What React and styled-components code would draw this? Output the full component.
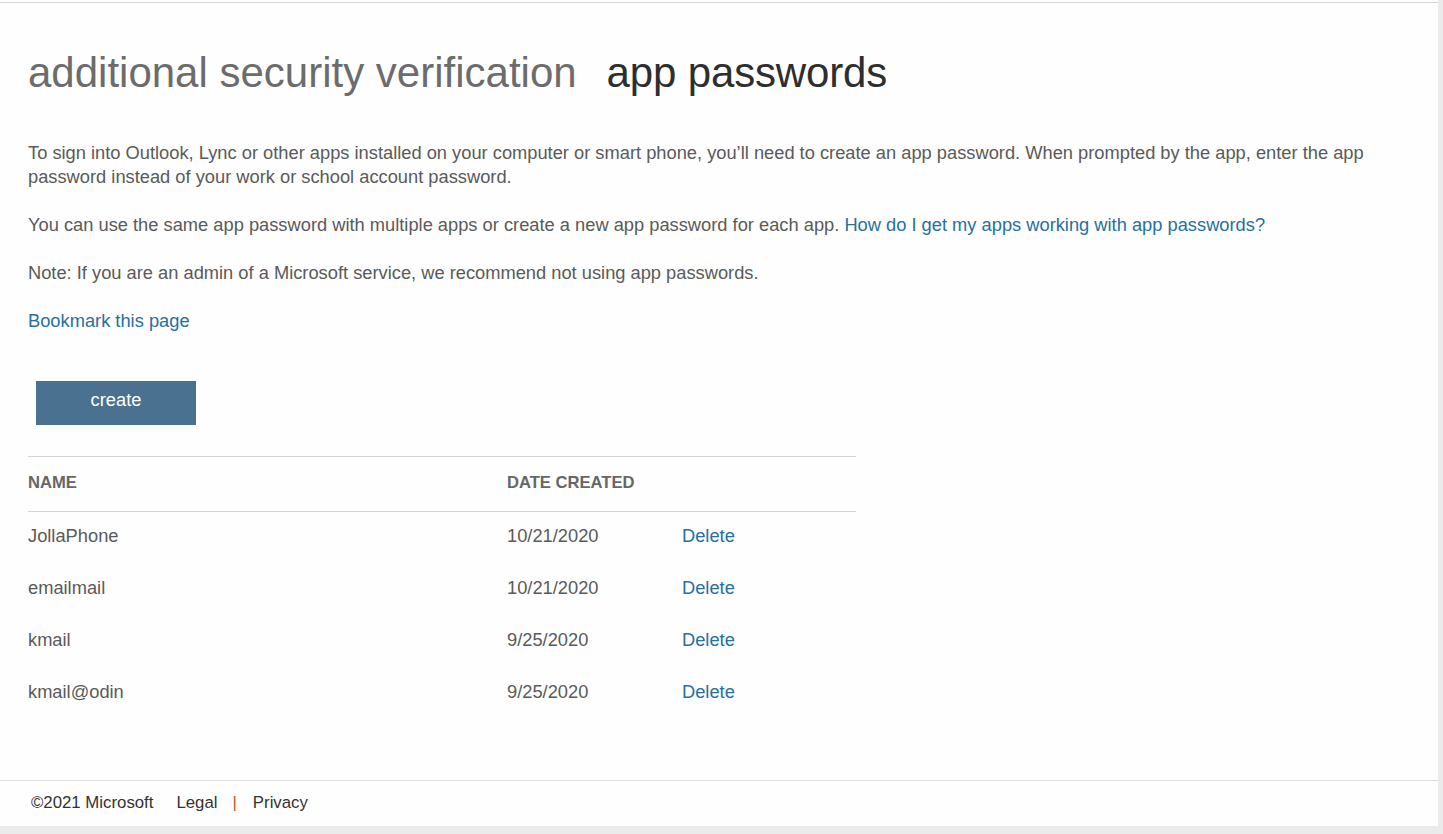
import React from 'react';
import styled, { createGlobalStyle } from 'styled-components';

const GlobalStyle = createGlobalStyle`
  html, body {
    margin: 0;
    padding: 0;
    height: 834px;
    overflow: hidden;
    background: #ebebeb;
  }
  body {
    font-family: "Liberation Sans", Arial, sans-serif;
  }
`;

// 整個頁面，右邊和下面留出灰色的捲軸區
const Page = styled.div`
  width: 1438px;
  height: 826px;
  background: #fefefe;
  display: flex;
  flex-direction: column;
`;

const TopRule = styled.div`
  height: 2px;
  border-bottom: 1px solid #d6d6d6;
`;

const Main = styled.main`
  padding: 0 28px;
  display: flex;
  flex-direction: column;
  align-items: flex-start;
`;

const Heading = styled.h1`
  margin: 46px 0 44px;
  font-size: 42px;
  font-weight: 400;
  line-height: 48px;
  white-space: nowrap;
`;

const Crumb = styled.span`
  color: ${({ $active }) => ($active ? '#2e2e2e' : '#6c6c6c')};
  margin-right: ${({ $active }) => ($active ? '0' : '30px')};
  letter-spacing: ${({ $active }) => ($active ? '-0.15px' : '0')};
`;

const Para = styled.p`
  margin: 0 0 24px;
  font-size: 18.3px;
  line-height: 24px;
  color: #5a5a5a;
  max-width: 1382px;
`;

const Link = styled.a`
  color: #27709f;
  text-decoration: none;
  cursor: pointer;
`;

const CreateButton = styled.button`
  margin: 24px 0 31px 8px;
  width: 160px;
  height: 44px;
  padding: 0 0 6px;
  border: none;
  background: #4a718f;
  color: #fff;
  font-family: inherit;
  font-size: 18.3px;
  cursor: pointer;
`;

const Table = styled.div`
  width: 828px;
  border-top: 1px solid #d4d4d4;
`;

const Row = styled.div`
  display: grid;
  grid-template-columns: 479px 175px 1fr;
  align-items: center;
  padding: ${({ $head }) => ($head ? '14px 0 16px' : '12px 0 16px')};
  line-height: 24px;
  border-bottom: ${({ $head }) => ($head ? '1px solid #d4d4d4' : 'none')};
`;

const HeadCell = styled.div`
  font-size: 16.6px;
  font-weight: 700;
  color: #666;
  text-transform: uppercase;
`;

const Cell = styled.div`
  font-size: 18.3px;
  color: #5a5a5a;
`;

const Footer = styled.footer`
  margin-top: auto;
  height: 46px;
  box-sizing: border-box;
  padding: 0 0 1px 31px;
  border-top: 1px solid #dcdcdc;
  display: flex;
  align-items: center;
  font-size: 16.8px;
  color: #333;
`;

const FooterItem = styled.span`
  margin-right: ${({ $gap }) => $gap}px;
`;

const Pipe = styled.span`
  color: #cc4f2c;
  margin-right: 16px;
`;

const passwords = [
  { name: 'JollaPhone', date: '10/21/2020' },
  { name: 'emailmail', date: '10/21/2020' },
  { name: 'kmail', date: '9/25/2020' },
  { name: 'kmail@odin', date: '9/25/2020' },
];

const App = () => (
  <>
    <GlobalStyle />
    <Page>
      <TopRule />
      <Main>
        <Heading>
          <Crumb>additional security verification</Crumb>
          <Crumb $active>app passwords</Crumb>
        </Heading>
        <Para>
          To sign into Outlook, Lync or other apps installed on your computer or smart phone, you’ll need to create an
          app password. When prompted by the app, enter the app password instead of your work or school account password.
        </Para>
        <Para>
          You can use the same app password with multiple apps or create a new app password for each app.{' '}
          <Link>How do I get my apps working with app passwords?</Link>
        </Para>
        <Para>Note: If you are an admin of a Microsoft service, we recommend not using app passwords.</Para>
        <Para>
          <Link>Bookmark this page</Link>
        </Para>
        <CreateButton>create</CreateButton>
        <Table>
          <Row $head>
            <HeadCell>Name</HeadCell>
            <HeadCell>Date created</HeadCell>
            <div />
          </Row>
          {passwords.map((p) => (
            <Row key={p.name}>
              <Cell>{p.name}</Cell>
              <Cell>{p.date}</Cell>
              <Cell>
                <Link>Delete</Link>
              </Cell>
            </Row>
          ))}
        </Table>
      </Main>
      <Footer>
        <FooterItem $gap={23}>©2021 Microsoft</FooterItem>
        <FooterItem $gap={15}>Legal</FooterItem>
        <Pipe>|</Pipe>
        <FooterItem $gap={0}>Privacy</FooterItem>
      </Footer>
    </Page>
  </>
);

export default App;
